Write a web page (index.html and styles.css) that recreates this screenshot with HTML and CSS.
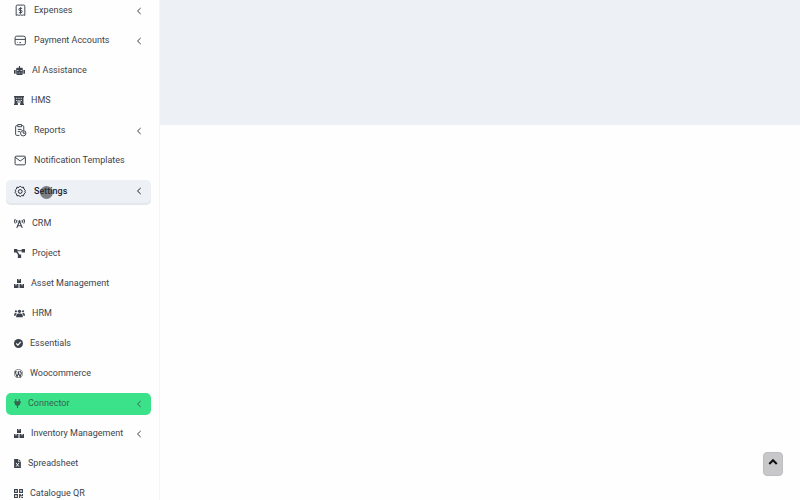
FILE: index.html
```html
<!DOCTYPE html>
<html lang="en">
<head>
  <meta charset="UTF-8">
  <title>Dashboard</title>
  <meta name="viewport" content="width=device-width, initial-scale=1">
  <link rel="stylesheet" href="styles.css">
</head>
<body>

  <svg class="defs" aria-hidden="true">
    <symbol id="chevron" viewBox="0 0 6 8"><path d="M4.700 1 L1.500 4 L4.700 7" fill="none" stroke="currentColor" stroke-width="1"/></symbol>
    <symbol id="boxes" viewBox="0 0 20 18">
      <path d="M6 0h3v3l1-.7 1 .7V0h3v8H6zM0 10h3v3l1-.7 1 .7v-3h4v8H0zM11 10h4v3l1-.7 1 .7v-3h3v8h-9z"/>
    </symbol>
  </svg>

  <div class="layout">
    <nav class="sidebar">
      <a href="#" class="item">
        <svg class="icon line" viewBox="0 0 24 24"><path d="M4 21V4a2 2 0 0 1 2-2h12a2 2 0 0 1 2 2v17l-3-1-2 1-3-1-3 1-2-1z"/><path d="M15 8h-4a2 2 0 0 0 0 4h2a2 2 0 0 1 0 4H9M12 6v12"/></svg>
        <span>Expenses</span>
        <svg class="chevron"><use href="#chevron"/></svg>
      </a>
      <a href="#" class="item">
        <svg class="icon line" viewBox="0 0 24 24"><rect x="2" y="4" width="19" height="16" rx="3"/><path d="M2 10h19M6 16h1M10 16h3"/></svg>
        <span>Payment Accounts</span>
        <svg class="chevron"><use href="#chevron"/></svg>
      </a>
      <a href="#" class="item">
        <svg class="icon wide" viewBox="0 0 20 16"><path fill-rule="evenodd" d="M9 0h2v3h3a2 2 0 0 1 2 2v9a2 2 0 0 1-2 2H6a2 2 0 0 1-2-2V5a2 2 0 0 1 2-2h3zM0 7h3v7H1a1 1 0 0 1-1-1zM17 7h3v6a1 1 0 0 1-1 1h-2zM6 7v2h2V7zM12 7v2h2V7zM6 12v1h2v-1zM9 12v1h2v-1zM12 12v1h2v-1z"/></svg>
        <span>AI Assistance</span>
      </a>
      <a href="#" class="item">
        <svg class="icon mid" viewBox="0 0 18 16"><path fill-rule="evenodd" d="M0 0h18v2h-1v12h1v2h-7v-3a2 2 0 0 0-4 0v3H0v-2h1V2H0zM4 3v2h2V3zM8 3v2h2V3zM12 3v2h2V3zM4 7v2h2V7zM8 7v2h2V7zM12 7v2h2V7zM5 13h1a3 3 0 0 1 6 0h1a4 4 0 0 0-8 0z"/></svg>
        <span>HMS</span>
      </a>
      <a href="#" class="item">
        <svg class="icon line" viewBox="0 0 24 24"><path d="M10 21H5a2 2 0 0 1-2-2V5a2 2 0 0 1 2-2h2M14 3h2a2 2 0 0 1 2 2v6M7 1h7v4H7zM7 10h7M7 14h4"/><circle cx="17" cy="17" r="5"/><path d="M17 13v4h4"/></svg>
        <span>Reports</span>
        <svg class="chevron"><use href="#chevron"/></svg>
      </a>
      <a href="#" class="item">
        <svg class="icon line" viewBox="0 0 24 24"><rect x="2" y="4" width="19" height="16" rx="2"/><path d="M2 6l9.500 7L21 6"/></svg>
        <span>Notification Templates</span>
      </a>
      <a href="#" class="item hovered">
        <svg class="icon line" viewBox="0 0 24 24"><path d="M9 4.500 11.500 2 14 4.500 17.500 4l1 3.500L21 10l-1 2 1 2-2.500 2.500-1 3.500-3.500-.5-2.500 2L9 19.500 5.500 20l-1-3.500L2 14l1-2-1-2 2.500-2.500L5.500 4z"/><circle cx="11.500" cy="12" r="3.500"/></svg>
        <span>Settings</span>
        <svg class="chevron"><use href="#chevron"/></svg>
        <i class="pointer"></i>
      </a>
      <a href="#" class="item">
        <svg class="icon wide" viewBox="0 0 20 16"><path d="M2.500 0Q-.5 4 2.500 8M5.500 1.500Q4 4 5.500 6.500M17.500 0q3 4 0 8M14.500 1.500q1.500 2.500 0 5M5 16l5-12 5 12M7 12h6" fill="none" stroke="currentColor" stroke-width="2"/><circle cx="10" cy="4" r="2"/></svg>
        <span>CRM</span>
      </a>
      <a href="#" class="item">
        <svg class="icon wide" viewBox="0 0 20 16"><path d="M0 0h6v2h8V0h6v6h-6V4H6l4 6h3v6H7v-6L4 6H0z"/></svg>
        <span>Project</span>
      </a>
      <a href="#" class="item">
        <svg class="icon mid"><use href="#boxes"/></svg>
        <span>Asset Management</span>
      </a>
      <a href="#" class="item">
        <svg class="icon wide" viewBox="0 0 20 16"><circle cx="10" cy="4" r="3"/><circle cx="3.500" cy="4" r="2"/><circle cx="16.500" cy="4" r="2"/><path d="M4 15v-3q0-4 4-4h4q4 0 4 4v3zM0 11q0-4 3-4h2q-2 2-2 5H0zM20 11q0-4-3-4h-2q2 2 2 5h3z"/></svg>
        <span>HRM</span>
      </a>
      <a href="#" class="item">
        <svg class="icon small" viewBox="0 0 16 16"><circle cx="8" cy="8" r="8"/><path d="M4 8l3 3 5-6" fill="none" stroke="#fff" stroke-width="2"/></svg>
        <span>Essentials</span>
      </a>
      <a href="#" class="item">
        <svg class="icon small" viewBox="0 0 16 16"><circle cx="8" cy="8" r="7.300" fill="none" stroke="currentColor" stroke-width="1"/><path d="M2 5l3.500 9L8 7l3 7 2.500-8M1.500 5H5M7 5h3M8 7l-1-2M11 3q0 2 2 4" fill="none" stroke="currentColor" stroke-width="1.800"/></svg>
        <span>Woocommerce</span>
      </a>
      <a href="#" class="item current">
        <svg class="icon tiny" viewBox="0 0 12 16"><path d="M2 0h2v4h4V0h2v4h2v2h-1v2q0 3-4 4v4H5v-4Q1 11 1 8V6H0V4h2z"/></svg>
        <span>Connector</span>
        <svg class="chevron"><use href="#chevron"/></svg>
      </a>
      <a href="#" class="item">
        <svg class="icon mid"><use href="#boxes"/></svg>
        <span>Inventory Management</span>
        <svg class="chevron"><use href="#chevron"/></svg>
      </a>
      <a href="#" class="item">
        <svg class="icon tiny" viewBox="0 0 12 16"><path d="M0 0h7v5h5v11H0zM8 0l4 4H8z"/><path d="M3.500 7l5 6.500M8.500 7l-5 6.500" fill="none" stroke="#fff" stroke-width="1.600"/></svg>
        <span>Spreadsheet</span>
      </a>
      <a href="#" class="item">
        <svg class="icon small" viewBox="0 0 16 16"><path fill-rule="evenodd" d="M0 0h7v7H0zM2 2v3h3V2zM9 0h7v7H9zM11 2v3h3V2zM0 9h7v7H0zM2 11v3h3v-3zM9 9h3v2h2V9h2v4h-5v3H9zM13 14h3v2h-3z"/></svg>
        <span>Catalogue QR</span>
      </a>
    </nav>

    <main class="content">
      <div class="banner"></div>
    </main>
  </div>

  <button class="to-top" type="button" aria-label="Scroll to top">
    <svg viewBox="0 0 12 8"><path d="M1.500 6.500 6 2l4.500 4.500" fill="none" stroke="currentColor" stroke-width="2.500"/></svg>
  </button>

</body>
</html>
```
FILE: styles.css
```css
:root {
  --text: #3c434d;
  --panel: #edf1f5;
  --green: #3ce28a;
}

* { box-sizing: border-box; }

body {
  margin: 0;
  font-family: Roboto, "Liberation Sans", sans-serif;
  font-size: 9px;
  font-weight: 400;
  color: var(--text);
  background-color: #fefefe;
}

.defs {
  position: absolute;
  width: 0;
  height: 0;
}

.layout {
  display: flex;
  height: 100vh;
  overflow: hidden;
}

.sidebar {
  flex: none;
  display: flex;
  flex-direction: column;
  gap: 8px;
  width: 160px;
  padding: 0 8px 0 6px;
  border-right: 1px solid #f3f5f7;
  overflow: hidden;
}

.item {
  flex: none;
  display: flex;
  align-items: center;
  gap: 7px;
  height: 22px;
  padding: 0 9px 1px 8px;
  border-radius: 5px;
  color: inherit;
  line-height: 13px;
  text-decoration: none;
  white-space: nowrap;
}

.icon {
  flex: none;
  height: 9px;
  fill: currentColor;
}

.line {
  width: 13px;
  height: 13px;
  fill: none;
  stroke: currentColor;
  stroke-width: 1.8;
}

.wide { width: 11px; }
.mid { width: 10px; }
.small { width: 9px; }
.tiny { width: 7px; }

.chevron {
  width: 6px;
  height: 8px;
  margin-left: auto;
}

.hovered {
  position: relative;
  height: 25px;
  padding-bottom: 3px;
  color: #1c232e;
  font-weight: 500;
  background-color: var(--panel);
  box-shadow: inset 0 -2px 1px #e3e7ec;
}

.pointer {
  position: absolute;
  left: 34px;
  top: 6px;
  width: 13px;
  height: 13px;
  border-radius: 50%;
  background-color: rgba(50, 52, 58, 0.6);
}

.current {
  background-color: var(--green);
  color: #37634f;
}

.content {
  flex: 1;
}

.banner {
  height: 25vh;
  background-color: var(--panel);
}

.to-top {
  position: fixed;
  right: 17px;
  bottom: 24px;
  display: flex;
  justify-content: center;
  width: 20px;
  height: 24px;
  padding: 5px 4px;
  border: 1px solid #bdbdbf;
  border-radius: 4px;
  color: #111;
  background-color: #c8c8ca;
}

.to-top svg {
  width: 12px;
  height: 8px;
}
```
